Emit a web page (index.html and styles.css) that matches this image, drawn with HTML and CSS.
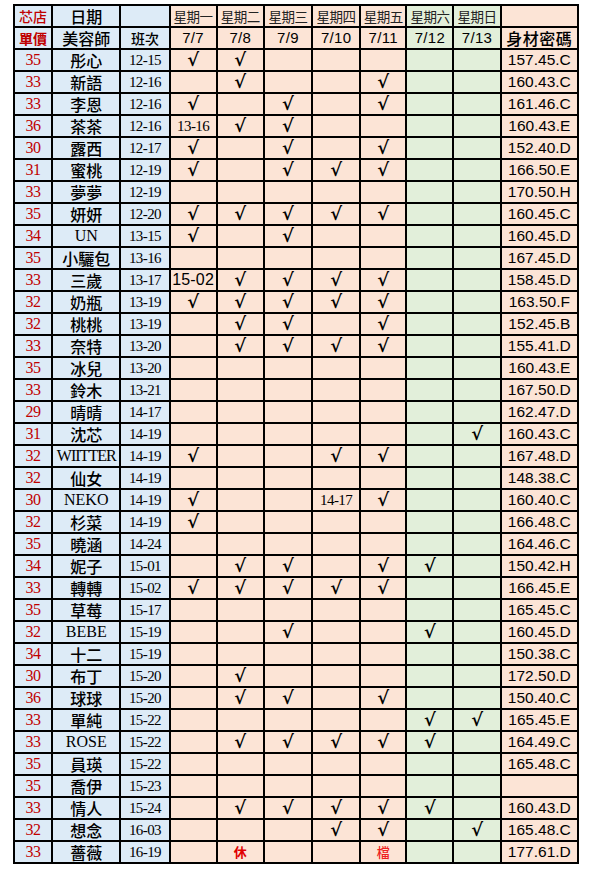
FILE: index.html
```html
<!DOCTYPE html>
<html lang="zh-Hant">
<head>
<meta charset="utf-8">
<title>班表</title>
<link rel="stylesheet" href="styles.css">
</head>
<body>
<div class="wrap">
<table class="sheet">
<colgroup>
<col class="c-price"><col class="c-name"><col class="c-shift">
<col class="c-day"><col class="c-day"><col class="c-day3"><col class="c-day3"><col class="c-day5">
<col class="c-day"><col class="c-day"><col class="c-meas">
</colgroup>
<tr>
<td class="b hd-red">芯店</td><td class="b hd">日期</td><td class="b"></td>
<td class="p dayh">星期一</td><td class="p dayh">星期二</td><td class="p dayh">星期三</td><td class="p dayh">星期四</td><td class="p dayh">星期五</td>
<td class="g dayh">星期六</td><td class="g dayh">星期日</td><td class="p"></td>
</tr>
<tr>
<td class="b hd-red strong">單價</td><td class="b hd">美容師</td><td class="b hd small">班次</td>
<td class="p date">7/7</td><td class="p date">7/8</td><td class="p date">7/9</td><td class="p date">7/10</td><td class="p date">7/11</td>
<td class="g date">7/12</td><td class="g date">7/13</td><td class="p hd meas-h">身材密碼</td>
</tr>
<tr><td class="b pr">35</td><td class="b nm">彤心</td><td class="b sh">12-15</td><td class="p ck">√</td><td class="p ck">√</td><td class="p"></td><td class="p"></td><td class="p"></td><td class="g"></td><td class="g"></td><td class="p ms">157.45.C</td></tr>
<tr><td class="b pr">33</td><td class="b nm">新語</td><td class="b sh">12-16</td><td class="p"></td><td class="p ck">√</td><td class="p"></td><td class="p"></td><td class="p ck">√</td><td class="g"></td><td class="g"></td><td class="p ms">160.43.C</td></tr>
<tr><td class="b pr">33</td><td class="b nm">李恩</td><td class="b sh">12-16</td><td class="p ck">√</td><td class="p"></td><td class="p ck">√</td><td class="p"></td><td class="p ck">√</td><td class="g"></td><td class="g"></td><td class="p ms">161.46.C</td></tr>
<tr><td class="b pr">36</td><td class="b nm">茶茶</td><td class="b sh">12-16</td><td class="p tm">13-16</td><td class="p ck">√</td><td class="p ck">√</td><td class="p"></td><td class="p"></td><td class="g"></td><td class="g"></td><td class="p ms">160.43.E</td></tr>
<tr><td class="b pr">30</td><td class="b nm">露西</td><td class="b sh">12-17</td><td class="p ck">√</td><td class="p"></td><td class="p ck">√</td><td class="p"></td><td class="p ck">√</td><td class="g"></td><td class="g"></td><td class="p ms">152.40.D</td></tr>
<tr><td class="b pr">31</td><td class="b nm">蜜桃</td><td class="b sh">12-19</td><td class="p ck">√</td><td class="p"></td><td class="p ck">√</td><td class="p ck">√</td><td class="p ck">√</td><td class="g"></td><td class="g"></td><td class="p ms">166.50.E</td></tr>
<tr><td class="b pr">33</td><td class="b nm">夢夢</td><td class="b sh">12-19</td><td class="p"></td><td class="p"></td><td class="p"></td><td class="p"></td><td class="p"></td><td class="g"></td><td class="g"></td><td class="p ms">170.50.H</td></tr>
<tr><td class="b pr">35</td><td class="b nm">妍妍</td><td class="b sh">12-20</td><td class="p ck">√</td><td class="p ck">√</td><td class="p ck">√</td><td class="p ck">√</td><td class="p ck">√</td><td class="g"></td><td class="g"></td><td class="p ms">160.45.C</td></tr>
<tr><td class="b pr">34</td><td class="b nm lat">UN</td><td class="b sh">13-15</td><td class="p ck">√</td><td class="p"></td><td class="p ck">√</td><td class="p"></td><td class="p"></td><td class="g"></td><td class="g"></td><td class="p ms">160.45.D</td></tr>
<tr><td class="b pr">35</td><td class="b nm">小驪包</td><td class="b sh">13-16</td><td class="p"></td><td class="p"></td><td class="p"></td><td class="p"></td><td class="p"></td><td class="g"></td><td class="g"></td><td class="p ms">167.45.D</td></tr>
<tr><td class="b pr">33</td><td class="b nm">三歲</td><td class="b sh">13-17</td><td class="p tm2">15-02</td><td class="p ck">√</td><td class="p ck">√</td><td class="p ck">√</td><td class="p ck">√</td><td class="g"></td><td class="g"></td><td class="p ms">158.45.D</td></tr>
<tr><td class="b pr">32</td><td class="b nm">奶瓶</td><td class="b sh">13-19</td><td class="p ck">√</td><td class="p ck">√</td><td class="p ck">√</td><td class="p ck">√</td><td class="p ck">√</td><td class="g"></td><td class="g"></td><td class="p ms">163.50.F</td></tr>
<tr><td class="b pr">32</td><td class="b nm">桃桃</td><td class="b sh">13-19</td><td class="p"></td><td class="p ck">√</td><td class="p ck">√</td><td class="p"></td><td class="p ck">√</td><td class="g"></td><td class="g"></td><td class="p ms">152.45.B</td></tr>
<tr><td class="b pr">33</td><td class="b nm">奈特</td><td class="b sh">13-20</td><td class="p"></td><td class="p ck">√</td><td class="p ck">√</td><td class="p ck">√</td><td class="p ck">√</td><td class="g"></td><td class="g"></td><td class="p ms">155.41.D</td></tr>
<tr><td class="b pr">35</td><td class="b nm">冰兒</td><td class="b sh">13-20</td><td class="p"></td><td class="p"></td><td class="p"></td><td class="p"></td><td class="p"></td><td class="g"></td><td class="g"></td><td class="p ms">160.43.E</td></tr>
<tr><td class="b pr">33</td><td class="b nm">鈴木</td><td class="b sh">13-21</td><td class="p"></td><td class="p"></td><td class="p"></td><td class="p"></td><td class="p"></td><td class="g"></td><td class="g"></td><td class="p ms">167.50.D</td></tr>
<tr><td class="b pr">29</td><td class="b nm">晴晴</td><td class="b sh">14-17</td><td class="p"></td><td class="p"></td><td class="p"></td><td class="p"></td><td class="p"></td><td class="g"></td><td class="g"></td><td class="p ms">162.47.D</td></tr>
<tr><td class="b pr">31</td><td class="b nm">沈芯</td><td class="b sh">14-19</td><td class="p"></td><td class="p"></td><td class="p"></td><td class="p"></td><td class="p"></td><td class="g"></td><td class="g ck">√</td><td class="p ms">160.43.C</td></tr>
<tr><td class="b pr">32</td><td class="b nm lat tight">WIITTER</td><td class="b sh">14-19</td><td class="p ck">√</td><td class="p"></td><td class="p"></td><td class="p ck">√</td><td class="p ck">√</td><td class="g"></td><td class="g"></td><td class="p ms">167.48.D</td></tr>
<tr><td class="b pr">32</td><td class="b nm">仙女</td><td class="b sh">14-19</td><td class="p"></td><td class="p"></td><td class="p"></td><td class="p"></td><td class="p"></td><td class="g"></td><td class="g"></td><td class="p ms">148.38.C</td></tr>
<tr><td class="b pr">30</td><td class="b nm lat">NEKO</td><td class="b sh">14-19</td><td class="p ck">√</td><td class="p"></td><td class="p"></td><td class="p tm">14-17</td><td class="p ck">√</td><td class="g"></td><td class="g"></td><td class="p ms">160.40.C</td></tr>
<tr><td class="b pr">32</td><td class="b nm">杉菜</td><td class="b sh">14-19</td><td class="p ck">√</td><td class="p"></td><td class="p"></td><td class="p"></td><td class="p"></td><td class="g"></td><td class="g"></td><td class="p ms">166.48.C</td></tr>
<tr><td class="b pr">35</td><td class="b nm">曉涵</td><td class="b sh">14-24</td><td class="p"></td><td class="p"></td><td class="p"></td><td class="p"></td><td class="p"></td><td class="g"></td><td class="g"></td><td class="p ms">164.46.C</td></tr>
<tr><td class="b pr">34</td><td class="b nm">妮子</td><td class="b sh">15-01</td><td class="p"></td><td class="p ck">√</td><td class="p ck">√</td><td class="p"></td><td class="p ck">√</td><td class="g ck">√</td><td class="g"></td><td class="p ms">150.42.H</td></tr>
<tr><td class="b pr">33</td><td class="b nm">轉轉</td><td class="b sh">15-02</td><td class="p ck">√</td><td class="p ck">√</td><td class="p ck">√</td><td class="p ck">√</td><td class="p ck">√</td><td class="g"></td><td class="g"></td><td class="p ms">166.45.E</td></tr>
<tr><td class="b pr">35</td><td class="b nm">草莓</td><td class="b sh">15-17</td><td class="p"></td><td class="p"></td><td class="p"></td><td class="p"></td><td class="p"></td><td class="g"></td><td class="g"></td><td class="p ms">165.45.C</td></tr>
<tr><td class="b pr">32</td><td class="b nm lat">BEBE</td><td class="b sh">15-19</td><td class="p"></td><td class="p"></td><td class="p ck">√</td><td class="p"></td><td class="p"></td><td class="g ck">√</td><td class="g"></td><td class="p ms">160.45.D</td></tr>
<tr><td class="b pr">34</td><td class="b nm">十二</td><td class="b sh">15-19</td><td class="p"></td><td class="p"></td><td class="p"></td><td class="p"></td><td class="p"></td><td class="g"></td><td class="g"></td><td class="p ms">150.38.C</td></tr>
<tr><td class="b pr">30</td><td class="b nm">布丁</td><td class="b sh">15-20</td><td class="p"></td><td class="p ck">√</td><td class="p"></td><td class="p"></td><td class="p"></td><td class="g"></td><td class="g"></td><td class="p ms">172.50.D</td></tr>
<tr><td class="b pr">36</td><td class="b nm">球球</td><td class="b sh">15-20</td><td class="p"></td><td class="p ck">√</td><td class="p ck">√</td><td class="p"></td><td class="p ck">√</td><td class="g"></td><td class="g"></td><td class="p ms">150.40.C</td></tr>
<tr><td class="b pr">33</td><td class="b nm">單純</td><td class="b sh">15-22</td><td class="p"></td><td class="p"></td><td class="p"></td><td class="p"></td><td class="p"></td><td class="g ck">√</td><td class="g ck">√</td><td class="p ms">165.45.E</td></tr>
<tr><td class="b pr">33</td><td class="b nm lat">ROSE</td><td class="b sh">15-22</td><td class="p"></td><td class="p ck">√</td><td class="p ck">√</td><td class="p ck">√</td><td class="p ck">√</td><td class="g ck">√</td><td class="g"></td><td class="p ms">164.49.C</td></tr>
<tr><td class="b pr">35</td><td class="b nm">員瑛</td><td class="b sh">15-22</td><td class="p"></td><td class="p"></td><td class="p"></td><td class="p"></td><td class="p"></td><td class="g"></td><td class="g"></td><td class="p ms">165.48.C</td></tr>
<tr><td class="b pr">35</td><td class="b nm">喬伊</td><td class="b sh">15-23</td><td class="p"></td><td class="p"></td><td class="p"></td><td class="p"></td><td class="p"></td><td class="g"></td><td class="g"></td><td class="p ms"></td></tr>
<tr><td class="b pr">33</td><td class="b nm">情人</td><td class="b sh">15-24</td><td class="p"></td><td class="p ck">√</td><td class="p ck">√</td><td class="p ck">√</td><td class="p ck">√</td><td class="g ck">√</td><td class="g"></td><td class="p ms">160.43.D</td></tr>
<tr><td class="b pr">32</td><td class="b nm">想念</td><td class="b sh">16-03</td><td class="p"></td><td class="p"></td><td class="p"></td><td class="p ck">√</td><td class="p ck">√</td><td class="g"></td><td class="g ck">√</td><td class="p ms">165.48.C</td></tr>
<tr><td class="b pr">33</td><td class="b nm">薔薇</td><td class="b sh">16-19</td><td class="p"></td><td class="p off">休</td><td class="p"></td><td class="p"></td><td class="p off light">檔</td><td class="g"></td><td class="g"></td><td class="p ms">177.61.D</td></tr>
</table>
</div>
</body>
</html>
```

FILE: styles.css
```css
html, body {
  margin: 0;
  padding: 0;
  background: #ffffff;
}

.wrap {
  padding: 4px 0 0 13px;
}

.sheet {
  border-collapse: collapse;
  table-layout: fixed;
  width: 566px;
  font-family: "Liberation Serif", "Noto Sans CJK TC", serif;
  color: #000;
}

.c-price { width: 38px; }
.c-name { width: 68px; }
.c-shift { width: 49px; }
.c-day { width: 47px; }
.c-day3 { width: 48px; }
.c-day5 { width: 46px; }
.c-meas { width: 77px; }

.sheet tr {
  height: 22px;
}

.sheet td {
  border: 2px solid #000;
  padding: 0;
  text-align: center;
  vertical-align: middle;
  line-height: 18px;
  white-space: nowrap;
  overflow: hidden;
}

.b { background: #ddebf7; }
.p { background: #fce4d6; }
.g { background: #e2efda; }

.hd {
  font-family: "Noto Sans CJK TC", sans-serif;
  font-size: 16px;
  font-weight: 500;
}
.hd.small { font-size: 14px; }
.meas-h { font-size: 16px; letter-spacing: 0.5px; }

.hd-red {
  font-family: "Noto Sans CJK TC", sans-serif;
  font-size: 14px;
  color: #c00000;
  font-weight: 500;
}
.hd-red.strong { font-weight: 700; }

.dayh {
  font-family: "Noto Sans CJK TC", sans-serif;
  font-size: 13.5px;
  letter-spacing: -0.5px;
  color: #222;
}

.date {
  font-family: "Liberation Sans", sans-serif;
  font-size: 15px;
  letter-spacing: 0.3px;
}

.pr {
  color: #c00000;
  font-size: 16px;
  letter-spacing: -0.5px;
}

.nm {
  font-family: "Noto Sans CJK TC", sans-serif;
  font-size: 16px;
  font-weight: 500;
}
.nm.lat {
  font-family: "Liberation Serif", serif;
  font-size: 16px;
  font-weight: 400;
}
.nm.tight { letter-spacing: -1px; }

.sh {
  font-size: 15px;
  letter-spacing: -0.6px;
}

.ck {
  font-family: "DejaVu Serif", serif;
  font-size: 18px;
  font-weight: 700;
  line-height: 18px;
}

.tm {
  font-size: 15px;
  letter-spacing: -0.6px;
}

.tm2 {
  font-family: "Liberation Sans", sans-serif;
  font-size: 16px;
  letter-spacing: 0.2px;
}

.off {
  font-family: "Noto Sans CJK TC", sans-serif;
  font-size: 13px;
  font-weight: 700;
  color: #e00000;
}
.off.light {
  color: #ee2020;
  font-weight: 500;
}

.ms {
  font-family: "Liberation Sans", sans-serif;
  font-size: 15.5px;
  text-align: left;
  padding-left: 2px;
}
```
